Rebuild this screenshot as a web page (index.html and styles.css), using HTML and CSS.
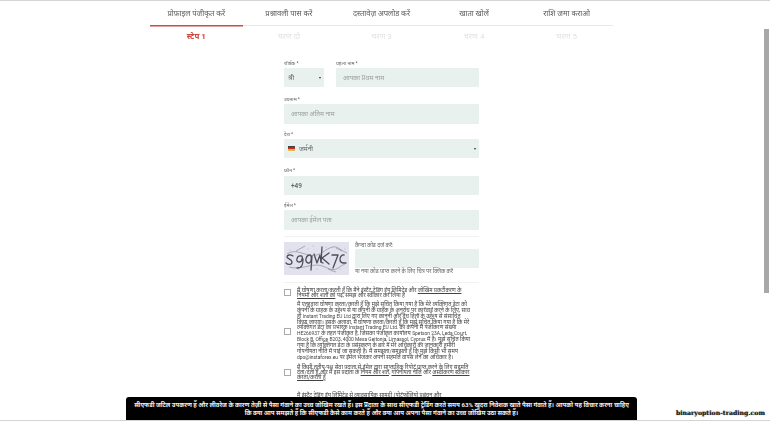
FILE: index.html
```html
<!DOCTYPE html>
<html lang="hi">
<head>
<meta charset="utf-8">
<title>प्रोफ़ाइल पंजीकृत करें</title>
<link rel="stylesheet" href="styles.css">
</head>
<body>
<div class="page">
  <nav class="tabs">
    <div class="tab active">प्रोफ़ाइल पंजीकृत करें</div>
    <div class="tab">प्रश्नावली पास करें</div>
    <div class="tab">दस्तावेज़ अपलोड करें</div>
    <div class="tab">खाता खोलें</div>
    <div class="tab">राशि जमा कराओ</div>
  </nav>
  <div class="steps">
    <div class="step current">स्टेप 1</div>
    <div class="step">चरण दो</div>
    <div class="step">चरण 3</div>
    <div class="step">चरण 4</div>
    <div class="step">चरण 5</div>
  </div>
  <form class="form">
    <div class="row">
      <div class="field title-field">
        <label class="label">शीर्षक<span class="req">*</span></label>
        <div class="input select"><span class="value">श्री</span><span class="caret"></span></div>
      </div>
      <div class="field grow">
        <label class="label">पहला नाम<span class="req">*</span></label>
        <div class="input placeholder">आपका प्रथम नाम</div>
      </div>
    </div>
    <div class="field">
      <label class="label">उपनाम<span class="req">*</span></label>
      <div class="input placeholder tall">आपका अंतिम नाम</div>
    </div>
    <div class="field">
      <label class="label country-label">देश<span class="req">*</span></label>
      <div class="input select">
        <span class="country">
          <svg class="flag" viewBox="0 0 6 4" aria-hidden="true"><rect width="6" height="1.4" fill="#222"/><rect y="1.4" width="6" height="1.3" fill="#c8302a"/><rect y="2.7" width="6" height="1.3" fill="#e8b030"/></svg>
          <span class="value">जर्मनी</span>
        </span>
        <span class="caret"></span>
      </div>
    </div>
    <div class="field">
      <label class="label phone-label">फ़ोन<span class="req">*</span></label>
      <div class="input phone">+49</div>
    </div>
    <div class="field">
      <label class="label email-label">ईमेल<span class="req">*</span></label>
      <div class="input placeholder tall">आपका ईमेल पता</div>
    </div>
    <div class="captcha">
      <svg class="captcha-img" viewBox="0 0 65 33" aria-hidden="true">
        <rect width="65" height="33" fill="#e2e1ee"/>
        <g fill="none" stroke="#4c4c55" stroke-width="1.3" stroke-linecap="round" stroke-linejoin="round">
          <path d="M9 14c-3-2-6-1-6 1s5 2 5 5-4 3-6 1"/>
          <path d="M17 14c-4-1-6 6-2 6s4-7 2-6zm2 3c0 6-1 9-6 9"/>
          <path d="M26 13c-4 0-6 7-2 8s4-8 2-8zm2 1l-1 14"/>
          <path d="M30 12l3 9 3-8 1 7 2 1"/>
          <path d="M38 5l-1 15M45 11l-7 5 7 6"/>
          <path d="M48 13h6l-5 13"/>
          <path d="M60 13c-4-1-6 7-1 8h3"/>
        </g>
        <g fill="none" stroke="#6d6d77" stroke-width=".5">
          <path d="M3 12c12-8 22 8 36-2s14-3 24 1"/>
          <path d="M5 25c14 4 24-6 36 0s12 0 20-3"/>
          <path d="M12 9l9-5M44 27l8 3M52 6l6 3"/>
        </g>
        <g fill="#8b8b95">
          <circle cx="6" cy="8" r=".4"/><circle cx="14" cy="27" r=".4"/><circle cx="24" cy="7" r=".4"/>
          <circle cx="33" cy="27" r=".4"/><circle cx="42" cy="5" r=".4"/><circle cx="56" cy="27" r=".4"/>
          <circle cx="61" cy="7" r=".4"/><circle cx="29" cy="4" r=".4"/><circle cx="48" cy="29" r=".4"/>
        </g>
      </svg>
      <div class="captcha-side">
        <div class="captcha-label">कैप्चा कोड दर्ज करें:</div>
        <div class="input captcha-input"></div>
        <div class="captcha-hint">या नया कोड प्राप्त करने के लिए चित्र पर क्लिक करें</div>
      </div>
    </div>
    <div class="agree first">
      <span class="box"></span>
      <p class="agree-text">मैं घोषणा करता/करती हूँ कि मैंने इंस्टैंट ट्रेडिंग ईयू लिमिटेड और <u>जोखिम प्रकटीकरण के नियमों और शर्तों को</u> पढ़, समझ और स्वीकार कर लिया है</p>
    </div>
    <div class="agree second">
      <span class="box"></span>
      <p class="agree-text">मैं एतद्द्वारा घोषणा करता/करती हूँ कि मुझे सूचित किया गया है कि मेरे व्यक्तिगत डेटा को कंपनी के ग्राहक के उद्देश्य से या कंपनी के ग्राहक के अनुरोध पर कार्रवाई करने के लिए, साथ ही <span class="latin">Instant Trading EU Ltd</span> द्वारा लिए गए कानूनी और वैध हितों के उद्देश्य से संसाधित किया जाएगा। इसके अलावा, मैं घोषणा करता/करती हूँ कि मुझे सूचित किया गया है कि मेरे व्यक्तिगत डेटा का प्रभारक <span class="latin">Instant Trading EU Ltd.</span> की कंपनी में पंजीकरण संख्या <span class="latin">HE266937</span> के तहत पंजीकृत है, जिसका पंजीकृत कार्यालय <span class="latin">Spetson 23A, Leda Court, Block B, Office B203, 4000 Mesa Geitonia, Limassol, Cyprus</span> में है। मुझे सूचित किया गया है कि व्यक्तिगत डेटा के प्रसंस्करण के बारे में मेरे अधिकारों की जानकारी हमारी गोपनीयता नीति में पाई जा सकती है। मैं समझता/समझती हूँ कि मुझे किसी भी समय <span class="latin">dpo@instaforex.eu</span> पर ईमेल भेजकर अपनी सहमति वापस लेने का अधिकार है।</p>
    </div>
    <div class="agree third">
      <span class="box"></span>
      <p class="agree-text">मैं किसी तृतीय-पक्ष सेवा प्रदाता से ईमेल द्वारा साप्ताहिक रिपोर्ट प्राप्त करने के लिए सहमति देता/देती हूँ और मैं इस प्रदाता के <u>नियम और शर्तें</u>, <u>गोपनीयता नीति</u> और <u>अस्वीकरण स्वीकार करता/करती हूँ</u></p>
    </div>
    <p class="agree-text last">मैं इंस्टैंट ट्रेडिंग ईयू लिमिटेड से व्यावसायिक सामग्री (पोर्टफोलियो प्रबंधन और</p>
  </form>
</div>
<div class="scrollbar"></div>
<aside class="risk">सीएफडी जटिल उपकरण हैं और लीवरेज के कारण तेज़ी से पैसा गंवाने का उच्च जोखिम रखते हैं। इस प्रदाता के साथ सीएफडी ट्रेडिंग करते समय 63% खुदरा निवेशक खाते पैसा गंवाते हैं। आपको यह विचार करना चाहिए<br>कि क्या आप समझते हैं कि सीएफडी कैसे काम करते हैं और क्या आप अपना पैसा गंवाने का उच्च जोखिम उठा सकते हैं।</aside>
<div class="watermark">binaryoption-trading.com</div>
</body>
</html>
```
FILE: styles.css
```css
* { box-sizing: border-box; }
html, body { margin: 0; height: 100%; overflow: hidden; background: #fff; }
body {
  font-family: Roboto, "Noto Sans", "Noto Sans Devanagari", "Liberation Sans", sans-serif;
  color: #555;
  border-top: 1px solid #d4d4d4;
  border-bottom: 1px solid #d4d4d4;
  position: relative;
}
.page { width: 463px; margin-left: 150px; filter: blur(0.35px); }
.tabs { display: flex; height: 25px; border-bottom: 1.5px solid #e8e8e8; }
.tab {
  flex: 1;
  text-align: center;
  font-size: 7.6px;
  line-height: 25px;
  color: #5a5a5a;
  white-space: nowrap;
}
.tab.active { box-shadow: 0 1.5px 0 #cf4a3e; }
.steps { display: flex; height: 20px; }
.step { flex: 1; text-align: center; font-size: 8px; line-height: 21px; color: #e2e2e2; }
.step.current { color: #d1453b; font-weight: 700; }
.form { width: 195px; margin: 9px 0 0 134px; display: flex; flex-direction: column; }
.row { display: flex; gap: 12px; }
.field { display: flex; flex-direction: column; flex: none; }
.title-field { width: 40px; }
.grow { flex: 1; }
.label { font-size: 5px; line-height: 7px; height: 13px; padding-top: 5px; color: #666; }
.country-label { height: 12px; padding-top: 4px; }
.phone-label { height: 14px; padding-top: 5px; }
.email-label { height: 12px; padding-top: 4px; }
.req { margin-left: 1px; color: #555; }
.input {
  height: 19px;
  background: #e9f1ef;
  font-size: 6.5px;
  line-height: 20px;
  padding: 0 7px;
  border-radius: 1px;
  color: #666;
  margin-bottom: 3.5px;
}
.input.tall { height: 20px; line-height: 21px; }
.placeholder { color: #9aa0a0; }
.select { display: flex; justify-content: space-between; align-items: center; padding: 0 3px 0 4px; }
.country { display: flex; align-items: center; gap: 4px; }
.flag { width: 7px; height: 5px; }
.caret { width: 0; height: 0; border: 1.5px solid transparent; border-top: 2px solid #333; border-bottom: 0; }
.phone { font-size: 6.5px; font-weight: 600; color: #666; line-height: 21px; }
.captcha {
  display: flex;
  gap: 6px;
  margin-top: 2px;
  padding-top: 5px;
  border-top: 1px solid #f1f1f1;
  height: 47px;
  border-bottom: 1px solid #f1f1f1;
}
.captcha-img { width: 65px; height: 33px; flex: none; }
.captcha-side { flex: 1; display: flex; flex-direction: column; }
.captcha-label { font-size: 5.5px; line-height: 7px; height: 7px; color: #666; }
.captcha-input { height: 19px; margin: 0; }
.captcha-hint { font-size: 5.5px; line-height: 7px; color: #666; }
.agree { display: flex; align-items: center; gap: 6px; width: 187px; }
.agree.first { margin-top: 5px; }
.agree.second { margin-top: 4px; }
.agree.third { margin-top: 4px; }
.box { width: 7px; height: 7px; flex: none; border: 1px solid #aaa; background: #fff; }
.agree-text { margin: 0; font-size: 5.5px; line-height: 5.3px; color: #444; }
.agree.second .agree-text { line-height: 5.85px; }
.latin { font-size: 4.9px; }
.agree-text.last { margin: 13px 0 0 13px; white-space: nowrap; }
.scrollbar { position: absolute; top: 28px; right: 1px; width: 5px; height: 264px; background: #a8a8a8; }
.risk {
  position: absolute;
  left: 126px;
  bottom: 0;
  width: 511px;
  height: 23px;
  background: #000;
  color: #f0f0f0;
  border-radius: 3px 3px 0 0;
  font-size: 6.1px;
  font-weight: 700;
  line-height: 7.5px;
  text-align: center;
  white-space: nowrap;
  padding: 4px 0 0;
}
.watermark {
  position: absolute;
  right: 5px;
  bottom: 4px;
  font-family: "DejaVu Serif", serif;
  font-size: 6.2px;
  font-weight: 700;
  color: #222;
  text-shadow: 0 0 1px #555;
}
```
